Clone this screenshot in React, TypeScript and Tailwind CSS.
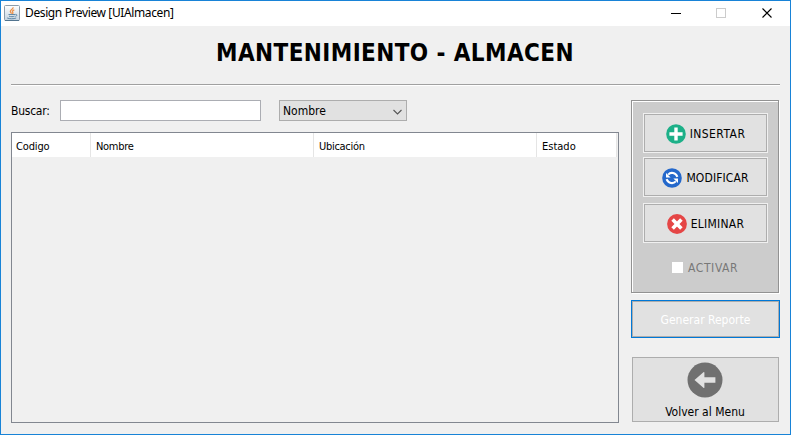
import type { ReactNode } from "react";

const uiFont = "font-['DejaVu_Sans_Condensed','DejaVu_Sans',sans-serif] [font-stretch:condensed]";

function JavaIcon() {
  return (
    <svg className="-translate-y-px" width="16" height="16" viewBox="0 0 16 16" fill="none">
      <defs>
        <linearGradient id="java" x1="0" y1="0" x2="0" y2="1">
          <stop stopColor="#fff" />
          <stop offset="1" stopColor="#c3d2df" />
        </linearGradient>
      </defs>
      <rect x=".5" y=".5" width="15" height="15" rx="1" fill="url(#java)" stroke="#8c9cab" />
      <path d="M1 15.5h14" stroke="#52748f" />
      <path d="M9 2.2C9.6 4 6 4.8 6.3 6.5c.1.9 1.3 1.3 1 2.3M10.3 4.8C8.5 5.5 8 6.3 8.7 7.2c.5.8.3 1.3-.4 1.8" stroke="#ed9149" strokeWidth="1.3" />
      <path d="M4.5 9.5h6.5M5 11.2c2 .6 4 .6 5.5 0M3.2 13c2.3 1 6.5 1 9 0M11.3 9.4c2.3-.4 1.8 1.8.1 2" stroke="#557f9f" strokeWidth=".9" />
    </svg>
  );
}

function InsertIcon() {
  return (
    <svg width="20" height="20" viewBox="0 0 20 20">
      <circle cx="10" cy="10" r="9.8" fill="#1cb088" />
      <path d="M10 3.4v13.2M3.4 10h13.2" stroke="#fff" strokeWidth="3.4" />
    </svg>
  );
}

function RefreshIcon() {
  return (
    <svg width="20" height="20" viewBox="0 0 20 20">
      <circle cx="10" cy="10" r="9.8" fill="#2468cb" />
      <path d="M6.2 6.6C8.8 3.8 13.6 4.4 15.4 8.8M13.8 13.4C11.2 16.2 6.4 15.6 4.6 11.2" fill="none" stroke="#fff" strokeWidth="2.1" />
      <path d="M4 5v4.4h4.6zM16 15v-4.4h-4.6z" fill="#fff" />
    </svg>
  );
}

function DeleteIcon() {
  return (
    <svg width="20" height="20" viewBox="0 0 20 20">
      <circle cx="10" cy="10" r="9.9" fill="#e54646" />
      <path d="M5.6 5.6l8.8 8.8M14.4 5.6l-8.8 8.8" stroke="#fff" strokeWidth="3.6" />
    </svg>
  );
}

function BackIcon() {
  return (
    <svg width="36" height="36" viewBox="0 0 36 36">
      <circle cx="18" cy="18" r="17.5" fill="#707070" />
      <path d="M7.5 18L16.4 10.2q1-.7 1 .6v4.4h11v5.6h-11v4.4q0 1.3-1 .6z" fill="#e1e1e1" />
    </svg>
  );
}

function ActionButton({ icon, className, labelClass, children }: { icon: ReactNode; className: string; labelClass: string; children: ReactNode }) {
  return (
    <button className={`flex h-10 w-[125px] shrink-0 border border-[#f0f0f0] ${className}`}>
      <span className="flex h-full w-full items-center justify-center gap-1 border border-[#adadad] bg-[#e1e1e1] pt-px">
        {icon}
        <span className={labelClass}>{children}</span>
      </span>
    </button>
  );
}

export default function App() {
  return (
    <div className={`flex h-[435px] w-[791px] flex-col overflow-hidden border border-[#1883d7] bg-[#f0f0f0] text-[12px] leading-4 whitespace-nowrap text-black ${uiFont}`}>
      <header className="flex h-[25px] shrink-0 items-center bg-white pl-[3px]">
        <JavaIcon />
        <span className="ml-[5px] -mt-px font-['Noto_Sans',sans-serif] text-[12px] tracking-[-0.38px] [font-stretch:normal]">Design Preview [UIAlmacen]</span>
        <svg className="mr-[16px] ml-auto" width="103" height="11" viewBox="0 0 103 11" fill="none">
          <path d="M0 5.5h10" stroke="#000" />
          <rect x="45.5" y=".5" width="9" height="9" stroke="#ccc" />
          <path d="M91.5 .5l9 9M100.5 .5l-9 9" stroke="#000" strokeWidth="1.1" />
        </svg>
      </header>

      <h1 className="h-[58px] shrink-0 pt-[11px] pr-px text-center text-[24px] leading-8 font-bold tracking-[0.4px]">
        <span>MANTENIMIENTO - ALMACEN</span>
      </h1>
      <div className="mr-[10px] ml-[10px] h-[2px] shrink-0 border-t border-[#a0a0a0] bg-white" />

      <main className="flex pt-[14px] pl-[10px]">
        <section className="w-[608px]">
          <div className="flex h-[21px] items-center">
            <label className="w-[49px] tracking-[-0.25px]">Buscar:</label>
            <input className="h-[21px] w-[201px] border border-[#abadb3] bg-white" />
            <div className="ml-[18px] flex h-[21px] w-[128px] items-center justify-between border border-[#adadad] bg-[#e1e1e1] pr-1 pl-[3px]">
              <span>Nombre</span>
              <svg className="translate-y-px" width="9" height="6" viewBox="0 0 9 6" fill="none">
                <path d="M.5 1l4 4 4-4" stroke="#555" strokeWidth="1.1" />
              </svg>
            </div>
          </div>
          <div className="mt-[11px] h-[291px] w-[608px] border border-[#828790]">
            <div className="flex h-6 bg-white text-[11px] leading-4">
              <HeaderCell className="w-[79px] pl-[4px] tracking-[-0.15px]">Codigo</HeaderCell>
              <HeaderCell className="w-[223px] pl-[5px] tracking-[-0.3px]">Nombre</HeaderCell>
              <HeaderCell className="w-[223px] pl-[5px] tracking-[-0.3px]">Ubicación</HeaderCell>
              <HeaderCell className="w-[80px] pl-[5px]">Estado</HeaderCell>
              <div className="flex-1 bg-[#f0f0f0]" />
            </div>
          </div>
        </section>

        <aside className="ml-3 w-[149px]">
          <div className="flex h-[193px] w-[148px] flex-col border border-[#929292] bg-[#cccccc] pt-3 pl-[11px] shadow-[inset_1px_1px_#fff,1px_1px_#fff]">
            <ActionButton className="" labelClass="tracking-[0.45px]" icon={<InsertIcon />}>INSERTAR</ActionButton>
            <ActionButton className="mt-1" labelClass="tracking-[0.12px]" icon={<RefreshIcon />}>MODIFICAR</ActionButton>
            <ActionButton className="mt-[6px]" labelClass="tracking-[0.25px]" icon={<DeleteIcon />}>ELIMINAR</ActionButton>
            <div className="mt-[16px] ml-[29px] flex items-center gap-[5px] text-[#787878]">
              <span className="h-[11px] w-[11px] bg-white" />
              <span className="pt-px tracking-[0.6px]">ACTIVAR</span>
            </div>
          </div>
          <button className="mt-[7px] flex h-[38px] w-[149px] border border-[#0078d7]">
            <span className="flex h-full w-full items-center justify-center border border-[#adadad] bg-[#e1e1e1] pt-px text-white">Generar Reporte</span>
          </button>
          <button className="mt-[19px] ml-px flex h-[65px] w-[147px] flex-col items-center border border-[#adadad] bg-[#e1e1e1] pt-[4px] pr-px">
            <BackIcon />
            <span className="mt-[6px]">Volver al Menu</span>
          </button>
        </aside>
      </main>
    </div>
  );
}

function HeaderCell({ className, children }: { className: string; children: ReactNode }) {
  return (
    <div className={`h-6 shrink-0 border-r border-[#e5e5e5] pt-[6px] ${className}`}>
      {children}
    </div>
  );
}
